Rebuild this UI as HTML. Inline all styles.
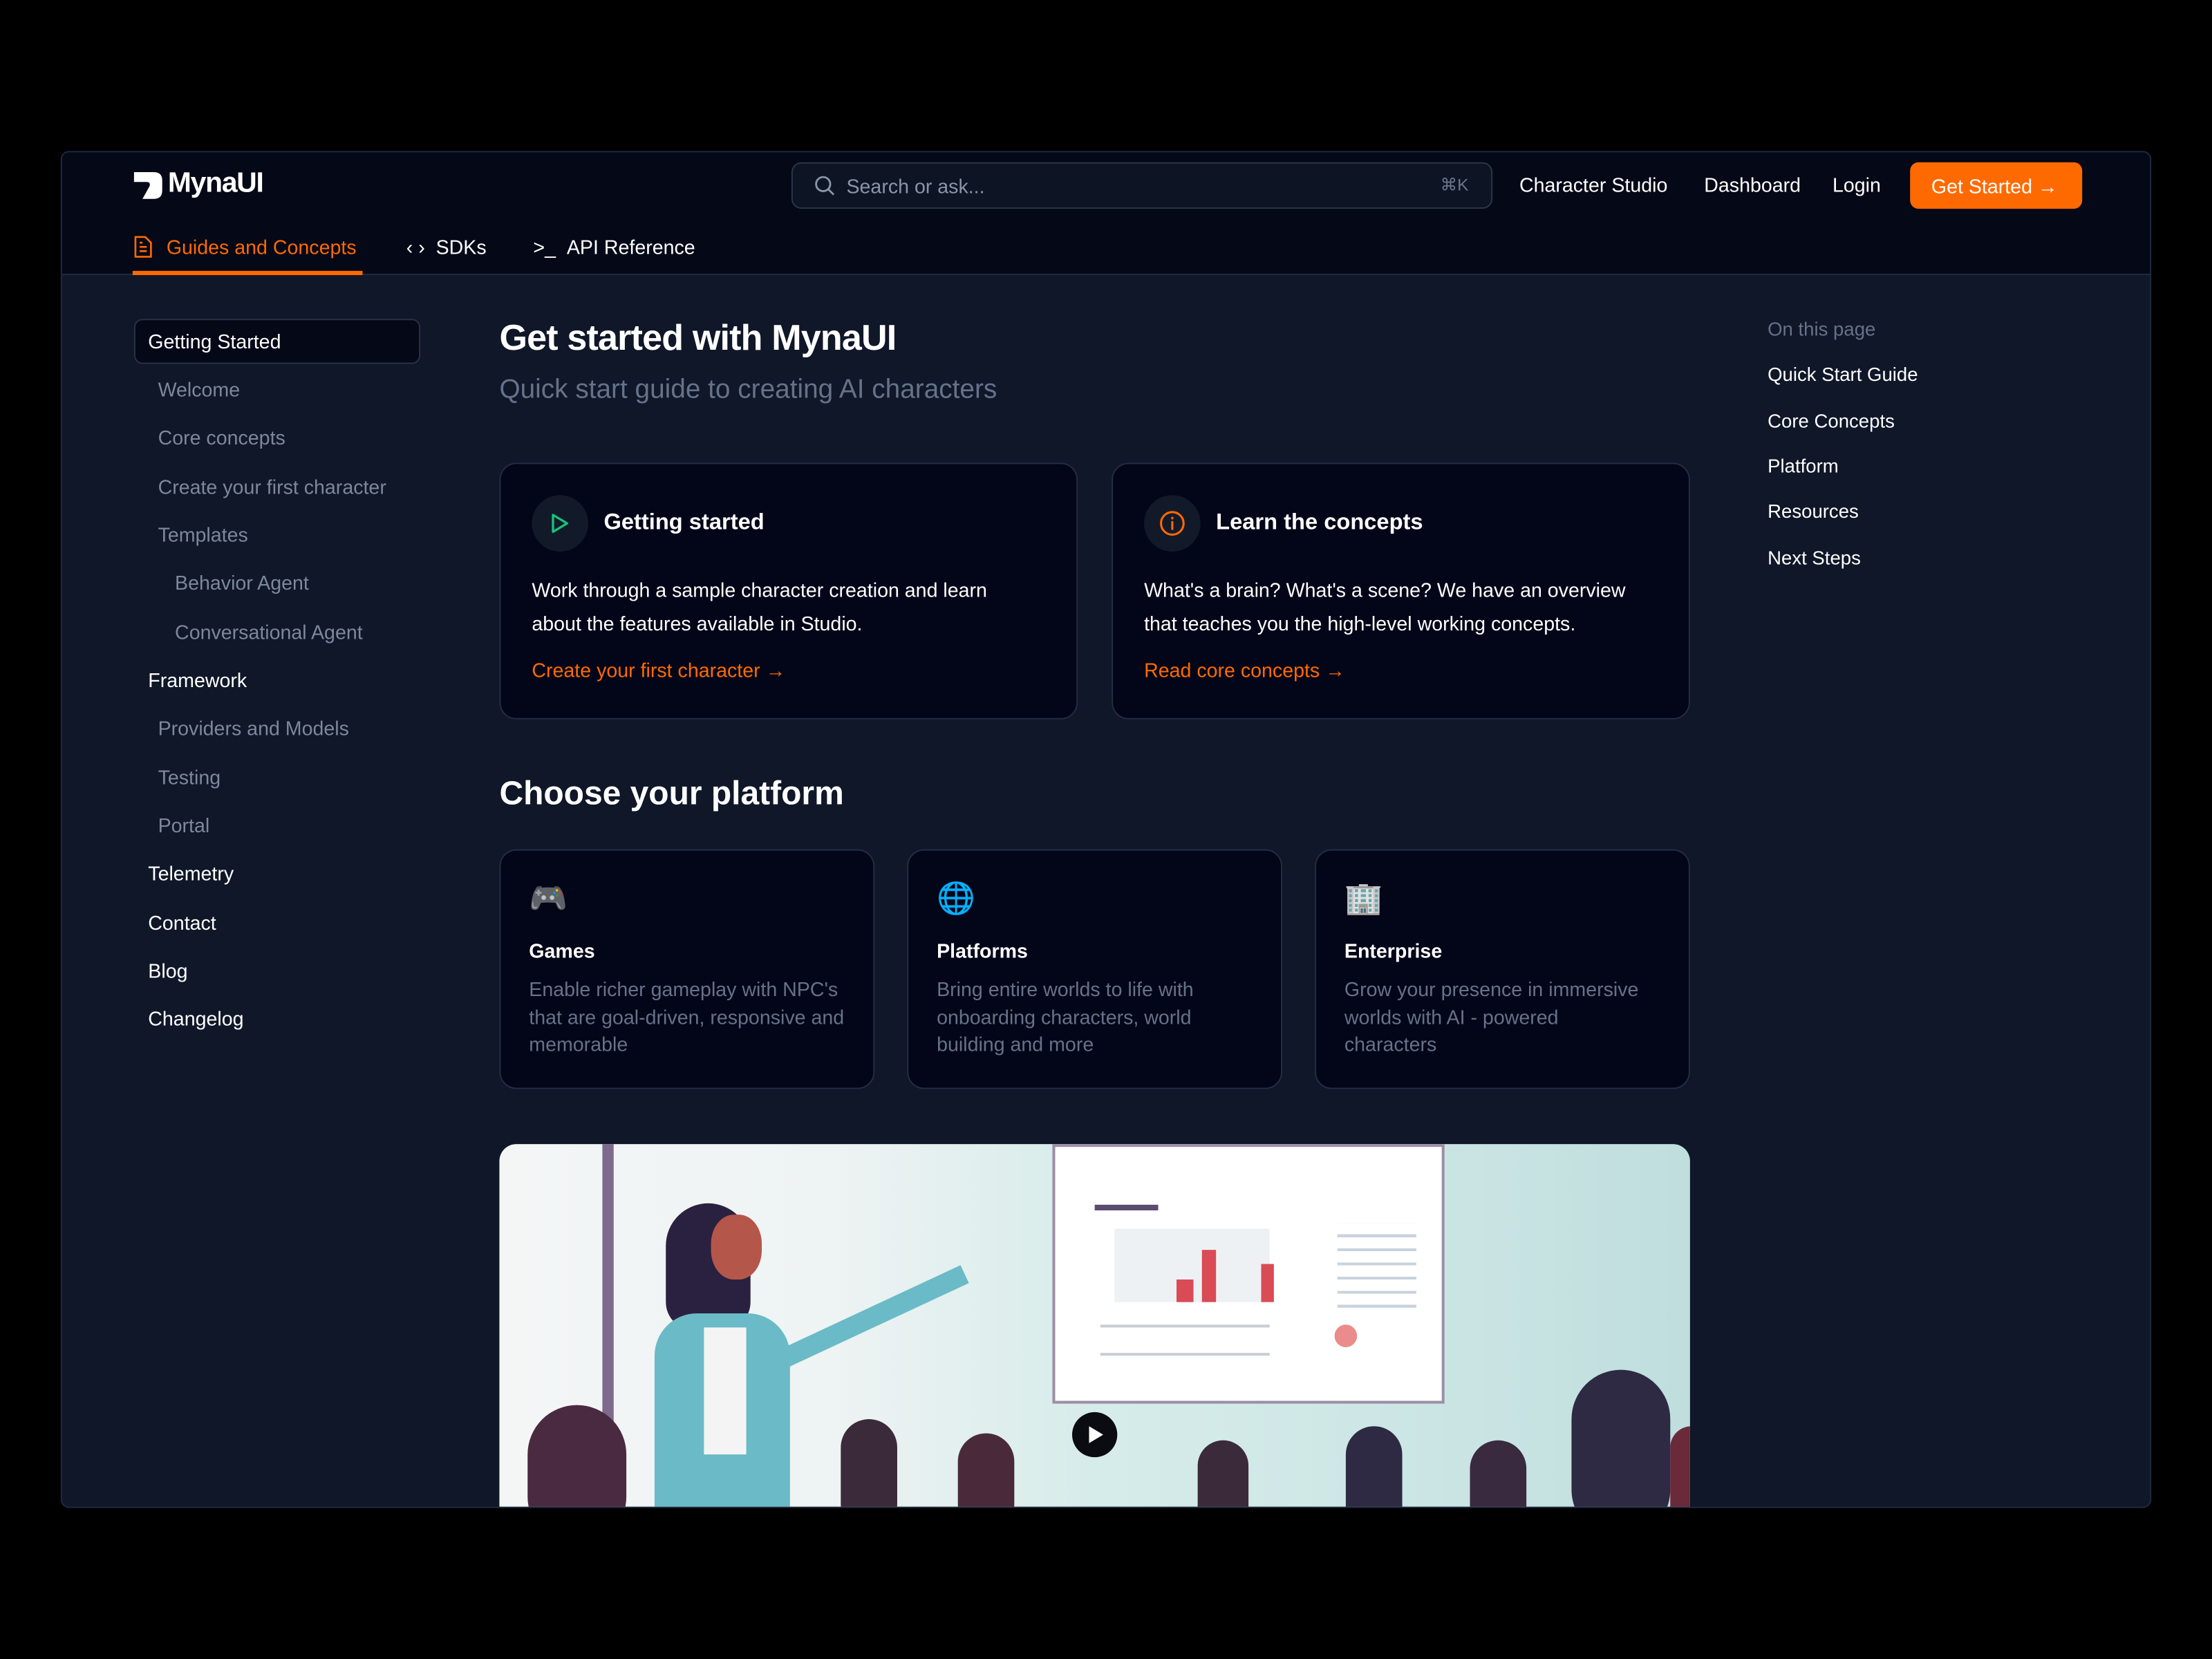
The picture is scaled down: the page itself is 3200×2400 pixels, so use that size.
<!DOCTYPE html>
<html><head><meta charset="utf-8"><style>
*{box-sizing:border-box;margin:0;padding:0}
html,body{width:3200px;height:2400px;background:#000;overflow:hidden}
#s{width:1568px;height:1176px;transform:scale(2.0408);transform-origin:0 0;position:relative;font-family:"Liberation Sans",sans-serif;color:#fff}
.a{position:absolute}
#frame{left:43px;top:107px;width:1482px;height:962px;border:1px solid #1e2a3c;border-radius:6px;background:#0f1728;overflow:hidden}
#hdr{left:0;top:0;width:1482px;height:87px;background:#040817;border-bottom:1px solid #1f2b3d}
.t{font-size:14px;white-space:nowrap}
.nav{font-size:14px;color:#7d889b}
.card{background:#030618;border:1px solid #222d40;border-radius:12px}
.or{color:#ff6a00}
.gray{color:#66728a}
</style></head><body><div id="s">
<div id="frame" class="a">
 <div id="hdr" class="a">
  <svg class="a" style="left:50px;top:13px" width="22" height="21" viewBox="0 0 22 21"><path d="M1 1H15Q21 1 21 7V14Q21 20 15 20H7L12 11Q13 8 10 8H1Z" fill="#fff"/></svg>
  <div class="a" style="left:75px;top:11px;font-size:20px;font-weight:bold;letter-spacing:-0.6px">MynaUI</div>
  <div class="a" style="left:517px;top:7px;width:497px;height:33px;border:1px solid #2a3548;border-radius:7px;background:#0d1424"></div>
  <svg class="a" style="left:533px;top:16px" width="15" height="15" viewBox="0 0 15 15"><circle cx="6.5" cy="6.5" r="5" fill="none" stroke="#8a95a8" stroke-width="1.4"/><path d="M10 10L14 14" stroke="#8a95a8" stroke-width="1.4"/></svg>
  <div class="a t" style="left:556px;top:16px;color:#8a95a8">Search or ask...</div>
  <div class="a t" style="left:977px;top:16px;color:#6b778c;font-size:12px">⌘K</div>
  <div class="a t" style="left:1033px;top:15px">Character Studio</div>
  <div class="a t" style="left:1164px;top:15px">Dashboard</div>
  <div class="a t" style="left:1255px;top:15px">Login</div>
  <div class="a t" style="left:1310px;top:7px;width:122px;height:33px;background:#ff6a00;border-radius:6px;padding:9px 0 0 15px">Get Started →</div>
  <svg class="a" style="left:51px;top:59px" width="13" height="16" viewBox="0 0 13 16"><path d="M1 1H8L12 5V15H1Z M4 8H9M4 11H9M4 5H6" fill="none" stroke="#ff6a00" stroke-width="1.3"/></svg>
  <div class="a t or" style="left:74px;top:59px">Guides and Concepts</div>
  <div class="a" style="left:50px;top:84px;width:163px;height:3px;background:#ff6a00"></div>
  <div class="a t" style="left:244px;top:59px">‹ ›&nbsp;&nbsp;SDKs</div>
  <div class="a t" style="left:334px;top:59px">&gt;_&nbsp;&nbsp;API Reference</div>
 </div>
 <div class="a" style="left:51px;top:118px;width:203px;height:32px;border:1px solid #263246;border-radius:6px;background:#040817"></div>
 <div class="a t" style="left:61px;top:126px">Getting Started</div>
 <div class="a nav" style="left:68px;top:160px">Welcome</div>
 <div class="a nav" style="left:68px;top:194px">Core concepts</div>
 <div class="a nav" style="left:68px;top:229px">Create your first character</div>
 <div class="a nav" style="left:68px;top:263px">Templates</div>
 <div class="a nav" style="left:80px;top:297px">Behavior Agent</div>
 <div class="a nav" style="left:80px;top:332px">Conversational Agent</div>
 <div class="a t" style="left:61px;top:366px">Framework</div>
 <div class="a nav" style="left:68px;top:400px">Providers and Models</div>
 <div class="a nav" style="left:68px;top:435px">Testing</div>
 <div class="a nav" style="left:68px;top:469px">Portal</div>
 <div class="a t" style="left:61px;top:503px">Telemetry</div>
 <div class="a t" style="left:61px;top:538px">Contact</div>
 <div class="a t" style="left:61px;top:572px">Blog</div>
 <div class="a t" style="left:61px;top:606px">Changelog</div>
 <div class="a" style="left:310px;top:118px;font-size:25.5px;font-weight:bold;letter-spacing:-0.4px">Get started with MynaUI</div>
 <div class="a" style="left:310px;top:158px;font-size:19px;color:#66728a">Quick start guide to creating AI characters</div>
 <div class="a card" style="left:310px;top:220px;width:410px;height:182px"></div>
 <div class="a" style="left:333px;top:243px;width:40px;height:40px;border-radius:50%;background:#121a2a"></div>
 <svg class="a" style="left:346px;top:255px" width="14" height="16" viewBox="0 0 14 16"><path d="M2 2L12 8L2 14Z" fill="none" stroke="#17c47a" stroke-width="1.6" stroke-linejoin="round"/></svg>
 <div class="a" style="left:384px;top:254px;font-size:16px;font-weight:bold">Getting started</div>
 <div class="a" style="left:333px;top:299px;font-size:14px;line-height:23.5px;width:340px">Work through a sample character creation and learn about the features available in Studio.</div>
 <div class="a t or" style="left:333px;top:359px">Create your first character →</div>
 <div class="a card" style="left:744px;top:220px;width:410px;height:182px"></div>
 <div class="a" style="left:767px;top:243px;width:40px;height:40px;border-radius:50%;background:#121a2a"></div>
 <svg class="a" style="left:777px;top:253px" width="20" height="20" viewBox="0 0 20 20"><circle cx="10" cy="10" r="8" fill="none" stroke="#ff6a00" stroke-width="1.5"/><path d="M10 9V14M10 6V6.5" stroke="#ff6a00" stroke-width="1.5" stroke-linecap="round"/></svg>
 <div class="a" style="left:818px;top:254px;font-size:16px;font-weight:bold">Learn the concepts</div>
 <div class="a" style="left:767px;top:299px;font-size:14px;line-height:23.5px;width:345px">What's a brain? What's a scene? We have an overview that teaches you the high-level working concepts.</div>
 <div class="a t or" style="left:767px;top:359px">Read core concepts →</div>
 <div class="a" style="left:310px;top:441px;font-size:23.5px;font-weight:bold">Choose your platform</div>
 <div class="a card" style="left:310px;top:494px;width:266px;height:170px"></div>
 <div class="a card" style="left:599px;top:494px;width:266px;height:170px"></div>
 <div class="a card" style="left:888px;top:494px;width:266px;height:170px"></div>
 <div class="a" style="left:331px;top:516px;font-size:22px">🎮</div>
 <div class="a" style="left:620px;top:516px;font-size:22px">🌐</div>
 <div class="a" style="left:909px;top:516px;font-size:22px">🏢</div>
 <div class="a" style="left:331px;top:558px;font-size:14px;font-weight:bold">Games</div>
 <div class="a" style="left:620px;top:558px;font-size:14px;font-weight:bold">Platforms</div>
 <div class="a" style="left:909px;top:558px;font-size:14px;font-weight:bold">Enterprise</div>
 <div class="a gray" style="left:331px;top:584px;font-size:14px;line-height:19.5px;width:226px">Enable richer gameplay with NPC's that are goal-driven, responsive and memorable</div>
 <div class="a gray" style="left:620px;top:584px;font-size:14px;line-height:19.5px;width:200px">Bring entire worlds to life with onboarding characters, world building and more</div>
 <div class="a gray" style="left:909px;top:584px;font-size:14px;line-height:19.5px;width:212px">Grow your presence in immersive worlds with AI - powered characters</div>
 <div class="a" style="left:310px;top:703px;width:844px;height:270px;border-radius:12px 12px 0 0;overflow:hidden;background:linear-gradient(90deg,#f4f6f6 0%,#eef3f3 28%,#d6ecea 50%,#cde6e5 75%,#bfdedd 100%)">
  <div class="a" style="left:73px;top:0;width:8px;height:270px;background:#7d6a8c"></div>
  <div class="a" style="left:392px;top:0;width:278px;height:184px;background:#fff;border:2px solid #9a8fa6"></div>
  <div class="a" style="left:422px;top:43px;width:45px;height:4px;background:#5a4d70"></div>
  <div class="a" style="left:436px;top:60px;width:110px;height:52px;background:#eef1f3"></div>
  <div class="a" style="left:480px;top:96px;width:12px;height:16px;background:#d94b55"></div>
  <div class="a" style="left:498px;top:75px;width:10px;height:37px;background:#d94b55"></div>
  <div class="a" style="left:540px;top:85px;width:9px;height:27px;background:#d94b55"></div>
  <div class="a" style="left:426px;top:128px;width:120px;height:2px;background:#c8cdd6"></div>
  <div class="a" style="left:426px;top:148px;width:120px;height:2px;background:#c8cdd6"></div>
  <div class="a" style="left:594px;top:56px;width:56px;height:60px;background:repeating-linear-gradient(#fff 0 8px,#c9d3de 8px 10px)"></div>
  <div class="a" style="left:592px;top:128px;width:16px;height:16px;border-radius:50%;background:#ea8c8c"></div>
  <div class="a" style="left:406px;top:190px;width:32px;height:32px;border-radius:50%;background:#0b0b12"></div>
  <svg class="a" style="left:417px;top:199px" width="12" height="14"><path d="M1 1L11 7L1 13Z" fill="#fff"/></svg>
  <div class="a" style="left:118px;top:42px;width:60px;height:90px;border-radius:30px 30px 20px 20px;background:#2a2140"></div>
  <div class="a" style="left:150px;top:50px;width:36px;height:46px;border-radius:45%;background:#b5564a"></div>
  <div class="a" style="left:110px;top:120px;width:96px;height:150px;border-radius:30px 30px 0 0;background:#6bbac7"></div>
  <div class="a" style="left:145px;top:130px;width:30px;height:90px;background:#f4f4f4"></div>
  <div class="a" style="left:200px;top:145px;width:140px;height:14px;background:#6bbac7;transform:rotate(-25deg);transform-origin:0 0"></div>
  <div class="a" style="left:20px;top:185px;width:70px;height:100px;border-radius:35px;background:#4a2a40"></div>
  <div class="a" style="left:242px;top:195px;width:40px;height:80px;border-radius:20px;background:#3a2a3a"></div>
  <div class="a" style="left:325px;top:205px;width:40px;height:70px;border-radius:20px;background:#4a2a3a"></div>
  <div class="a" style="left:495px;top:210px;width:36px;height:70px;border-radius:18px;background:#3a2a3a"></div>
  <div class="a" style="left:600px;top:200px;width:40px;height:80px;border-radius:20px;background:#2e2a44"></div>
  <div class="a" style="left:688px;top:210px;width:40px;height:70px;border-radius:20px;background:#3a2a40"></div>
  <div class="a" style="left:760px;top:160px;width:70px;height:120px;border-radius:35px;background:#2e2a44"></div>
  <div class="a" style="left:830px;top:200px;width:30px;height:80px;border-radius:15px;background:#6a2a3a"></div>
 </div>
 <div class="a t gray" style="left:1209px;top:118px;font-size:13.5px">On this page</div>
 <div class="a t" style="left:1209px;top:150px;font-size:13.5px">Quick Start Guide</div>
 <div class="a t" style="left:1209px;top:183px;font-size:13.5px">Core Concepts</div>
 <div class="a t" style="left:1209px;top:215px;font-size:13.5px">Platform</div>
 <div class="a t" style="left:1209px;top:247px;font-size:13.5px">Resources</div>
 <div class="a t" style="left:1209px;top:280px;font-size:13.5px">Next Steps</div>
</div>
</div></body></html>
